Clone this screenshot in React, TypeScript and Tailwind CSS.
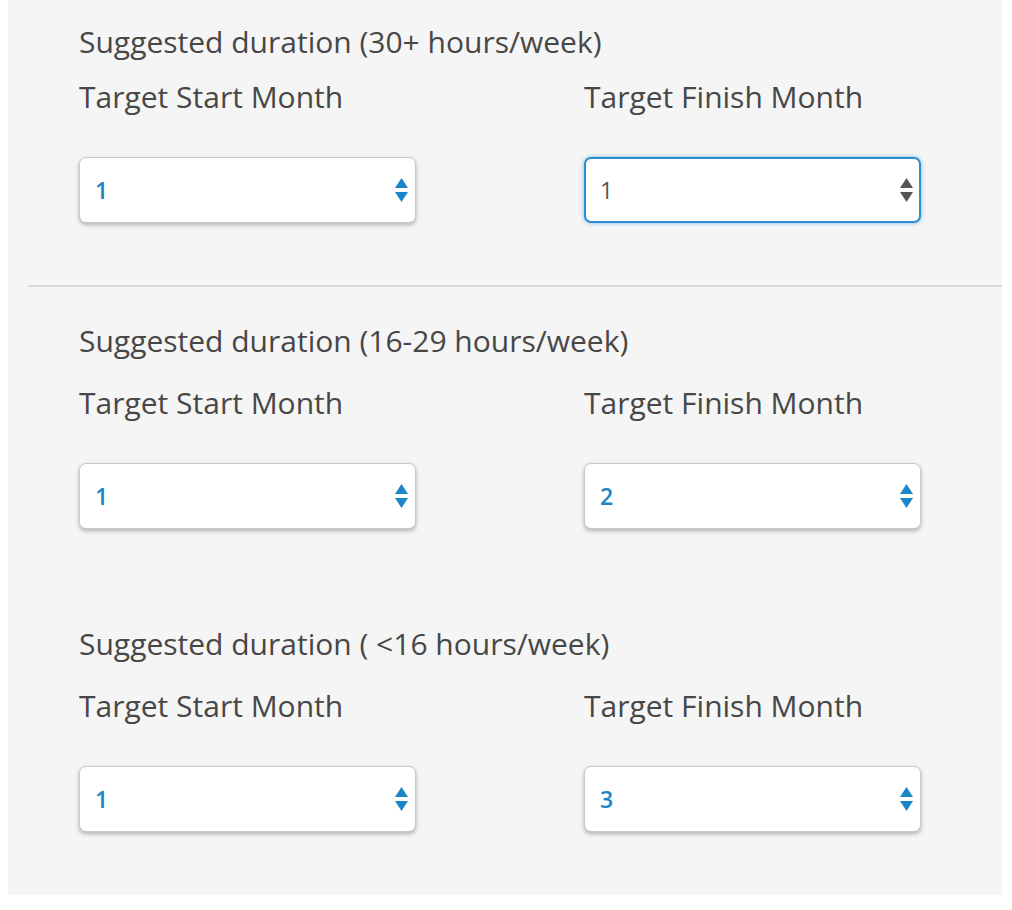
import React from "react";

function Arrows({ color }: { color: string }) {
  return (
    <svg width="13" height="24" viewBox="0 0 13 24" className="shrink-0">
      <polygon points="6.5,0 13,10 0,10" fill={color} />
      <polygon points="0,14 13,14 6.5,24" fill={color} />
    </svg>
  );
}

function SelectBox({ value, focused }: { value: string; focused?: boolean }) {
  return (
    <div
      className={
        focused
          ? "flex h-[66px] w-[337px] items-center justify-between rounded-[7px] border-2 border-[#2b8fd3] bg-white pl-[14px] pr-[6px] shadow-[0_0_4px_rgba(43,143,211,0.6)]"
          : "flex h-[66px] w-[337px] items-center justify-between rounded-[7px] border border-[#c9c9c9] bg-white pl-[15px] pr-[7px] shadow-[0_2px_4px_rgba(0,0,0,0.28)]"
      }
    >
      <span
        className={
          focused
            ? "text-[23px] font-medium text-[#555555]"
            : "text-[23px] font-semibold text-[#1b86c7]"
        }
      >
        {value}
      </span>
      <Arrows color={focused ? "#555555" : "#1b86c7"} />
    </div>
  );
}

const T = "text-[30px] leading-[36px] text-[#474747]";

function Section({
  title,
  start,
  finish,
  focused,
  headingGap,
  boxGap,
}: {
  title: string;
  start: string;
  finish: string;
  focused?: boolean;
  headingGap: string;
  boxGap: string;
}) {
  return (
    <div className="flex flex-col pl-[71px]">
      <div className={T}>{title}</div>
      <div className={"grid grid-cols-[505px_1fr] " + headingGap}>
        <div className="flex flex-col">
          <div className={T}>Target Start Month</div>
          <div className={boxGap}>
            <SelectBox value={start} />
          </div>
        </div>
        <div className="flex flex-col">
          <div className={T}>Target Finish Month</div>
          <div className={boxGap}>
            <SelectBox value={finish} focused={focused} />
          </div>
        </div>
      </div>
    </div>
  );
}

export default function App() {
  return (
    <div className="min-h-[910px] bg-white" style={{ fontFamily: "'Open Sans', Lato, sans-serif" }}>
      <div className="ml-[8px] flex w-[994px] flex-col bg-[#f5f5f5] pt-[24px] pb-[63px]">
        <Section
          title="Suggested duration (30+ hours/week)"
          start="1"
          finish="1"
          focused
          headingGap="mt-[19px]"
          boxGap="mt-[42px]"
        />
        <div className="ml-[20px] mt-[62px] h-[2px] bg-[#dadada]" />
        <div className="mt-[36px]">
          <Section
            title="Suggested duration (16-29 hours/week)"
            start="1"
            finish="2"
            headingGap="mt-[26px]"
            boxGap="mt-[42px]"
          />
        </div>
        <div className="mt-[97px]">
          <Section
            title="Suggested duration ( <16 hours/week)"
            start="1"
            finish="3"
            headingGap="mt-[26px]"
            boxGap="mt-[42px]"
          />
        </div>
      </div>
    </div>
  );
}
